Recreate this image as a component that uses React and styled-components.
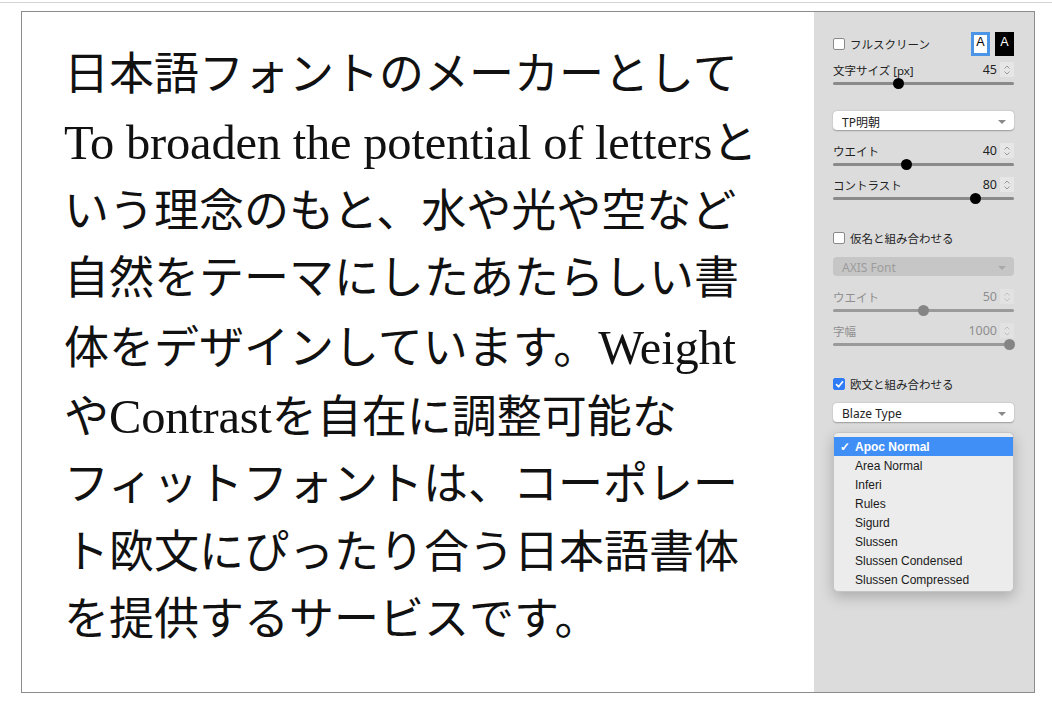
import React from 'react';
import styled, { createGlobalStyle } from 'styled-components';

const Global = createGlobalStyle`
html, body {
    margin: 0;
    padding: 0;
    background: #fff;
}
body {
    font-family: 'Noto Sans', 'Noto Sans CJK JP', sans-serif;
}
`;

const TopRule = styled.div`
height: 1px;
margin-top: 2px;
background: #d4d4d4;
`;

const Frame = styled.div`
display: flex;
margin: 8px 0 0 21px;
width: 1014px;
height: 682px;
box-sizing: border-box;
border: 1px solid #8c8c8c;
`;

const Preview = styled.div`
flex: 1;
background: #fff;
padding: 30px 0 0 42px;
font-family: 'Liberation Serif', 'Noto Sans CJK JP', serif;
font-size: 45px;
line-height: 67.4px;
color: #111;
`;

const Line = styled.div`
white-space: nowrap;
`;

// the Latin face of the sample runs larger than the kana
const Latin = styled.span`
font-size: 48.5px;
letter-spacing: -0.2px;
`;

const Sidebar = styled.aside`
position: relative;
width: 220px;
background: #dcdcdc;
padding: 19px 20px 0 19px;
box-sizing: border-box;
display: flex;
flex-direction: column;
font-size: 11.5px;
color: #222;
`;

const Row = styled.div`
display: flex;
align-items: center;
justify-content: space-between;
height: ${p => p.h || 16}px;
margin-top: ${p => p.mt || 0}px;
`;

const CheckLabel = styled.label`
display: flex;
align-items: center;
gap: 5px;
`;

const Box = styled.span`
display: inline-flex;
align-items: center;
justify-content: center;
width: 12px;
height: 12px;
box-sizing: border-box;
border-radius: 2px;
background: ${p => p.checked ? '#2f7cf6' : '#fff'};
border: 1px solid ${p => p.checked ? '#2f7cf6' : '#8a8a8a'};
`;

const Modes = styled.div`
display: flex;
gap: 5px;
`;

const ModeButton = styled.span`
display: flex;
align-items: flex-start;
justify-content: center;
width: 19px;
height: 24px;
box-sizing: border-box;
padding-top: ${p => p.dark ? 3 : 0}px;
font-family: 'Liberation Sans', sans-serif;
font-size: 12.5px;
background: ${p => p.dark ? '#000' : '#fff'};
color: ${p => p.dark ? '#fff' : '#000'};
border: ${p => p.dark ? 'none' : '3px solid #4a95e6'};
`;

const Field = styled.div`
margin-top: ${p => p.mt || 0}px;
color: ${p => p.disabled ? '#8e8e8e' : '#222'};
`;

const FieldHead = styled.div`
display: flex;
align-items: center;
justify-content: space-between;
height: 15px;
`;

const ValueBox = styled.div`
display: flex;
align-items: center;
gap: 3px;
font-size: 12.5px;
`;

const Stepper = styled.span`
display: flex;
align-items: center;
justify-content: center;
width: 14px;
height: 15px;
background: ${p => p.disabled ? '#e2e2e2' : '#e6e6e6'};
`;

const Track = styled.div`
position: relative;
height: 12px;
&:before {
    content: "";
    position: absolute;
    left: 0;
    right: 0;
    top: 5px;
    height: 3px;
    border-radius: 2px;
    background: ${p => p.disabled ? '#9a9a9a' : '#8a8a8a'};
}
`;

const Thumb = styled.span`
position: absolute;
top: 1px;
left: ${p => p.pos}%;
width: 11px;
height: 11px;
margin-left: -5.5px;
border-radius: 50%;
background: ${p => p.disabled ? '#858585' : '#000'};
`;

const Select = styled.div`
display: flex;
align-items: center;
justify-content: space-between;
height: 19px;
margin-top: ${p => p.mt || 0}px;
padding: 2px 8px 0 9px;
box-sizing: border-box;
border-radius: 4px;
font-size: 12px;
background: ${p => p.disabled ? '#c6c6c6' : '#fff'};
color: ${p => p.disabled ? '#9c9c9c' : '#222'};
box-shadow: ${p => p.disabled ? 'none' : '0 0.5px 1.5px rgba(0,0,0,0.3)'};
`;

const Caret = styled.span`
width: 0;
height: 0;
border-left: 4px solid transparent;
border-right: 4px solid transparent;
border-top: 4px solid ${p => p.disabled ? '#a8a8a8' : '#8a8a8a'};
`;

const Menu = styled.ul`
position: absolute;
left: 19px;
top: 420px;
width: 181px;
height: 160px;
margin: 0;
padding: 4px 0 0;
box-sizing: border-box;
list-style: none;
border-radius: 5px;
background: #ececec;
border: 0.5px solid #c4c4c4;
box-shadow: 0 5px 14px rgba(0,0,0,0.22);
font-family: 'Liberation Sans', sans-serif;
font-size: 12px;
color: #1a1a1a;
`;

const Item = styled.li`
display: flex;
align-items: center;
height: 19px;
padding-left: ${p => p.active ? 6 : 21}px;
background: ${p => p.active ? '#3f8ff6' : 'transparent'};
color: ${p => p.active ? '#fff' : '#1a1a1a'};
font-weight: ${p => p.active ? 600 : 400};
`;

const Check = styled.span`
width: 15px;
`;

const Tick = () => (
    <svg width="9" height="9" viewBox="0 0 9 9">
        <path d="M1.5 4.6 L3.6 6.8 L7.6 1.8" stroke="#fff" strokeWidth="1.6" fill="none" strokeLinecap="round" strokeLinejoin="round" />
    </svg>
);

const Updown = ({ disabled }) => (
    <Stepper disabled={disabled}>
        <svg width="8" height="12" viewBox="0 0 8 12">
            <path d="M1.5 4.5 L4 2 L6.5 4.5 M1.5 7.5 L4 10 L6.5 7.5" stroke={disabled ? '#c0c0c0' : '#9a9a9a'} strokeWidth="1" fill="none" />
        </svg>
    </Stepper>
);

const Slider = ({ label, value, pos, mt, disabled }) => (
    <Field mt={mt} disabled={disabled}>
        <FieldHead>
            <span>{label}</span>
            <ValueBox>{value}<Updown disabled={disabled} /></ValueBox>
        </FieldHead>
        <Track disabled={disabled}>
            <Thumb pos={pos} disabled={disabled} />
        </Track>
    </Field>
);

// each line of the sample, Latin runs kept apart so they can be sized
const lines = [
    ['日本語フォントのメーカーとして'],
    [{ l: 'To broaden the potential of letters' }, 'と'],
    ['いう理念のもと、水や光や空など'],
    ['自然をテーマにしたあたらしい書'],
    ['体をデザインしています。', { l: 'Weight' }],
    ['や', { l: 'Contrast' }, 'を自在に調整可能な'],
    ['フィットフォントは、コーポレー'],
    ['ト欧文にぴったり合う日本語書体'],
    ['を提供するサービスです。'],
];

const fonts = ['Area Normal', 'Inferi', 'Rules', 'Sigurd', 'Slussen', 'Slussen Condensed', 'Slussen Compressed'];

const App = () => (
    <>
        <Global />
        <TopRule />
        <Frame>
            <Preview>
                {lines.map((parts, i) => (
                    <Line key={i}>
                        {parts.map((p, j) => typeof p === 'string' ? p : <Latin key={j}>{p.l}</Latin>)}
                    </Line>
                ))}
            </Preview>
            <Sidebar>
                <Row h={26}>
                    <CheckLabel><Box />フルスクリーン</CheckLabel>
                    <Modes>
                        <ModeButton>A</ModeButton>
                        <ModeButton dark>A</ModeButton>
                    </Modes>
                </Row>
                <Slider label="文字サイズ [px]" value="45" pos={36} mt={5} />
                <Select mt={22}>TP明朝<Caret /></Select>
                <Slider label="ウエイト" value="40" pos={40.5} mt={13} />
                <Slider label="コントラスト" value="80" pos={79} mt={7} />
                <Row mt={26}>
                    <CheckLabel><Box />仮名と組み合わせる</CheckLabel>
                </Row>
                <Select mt={11} disabled>AXIS Font<Caret disabled /></Select>
                <Slider label="ウエイト" value="50" pos={50} mt={13} disabled />
                <Slider label="字幅" value="1000" pos={97.5} mt={7} disabled />
                <Row mt={26}>
                    <CheckLabel><Box checked><Tick /></Box>欧文と組み合わせる</CheckLabel>
                </Row>
                <Select mt={11}>Blaze Type<Caret /></Select>
                <Menu>
                    <Item active><Check>✓</Check>Apoc Normal</Item>
                    {fonts.map(f => <Item key={f}>{f}</Item>)}
                </Menu>
            </Sidebar>
        </Frame>
    </>
);

export default App;
